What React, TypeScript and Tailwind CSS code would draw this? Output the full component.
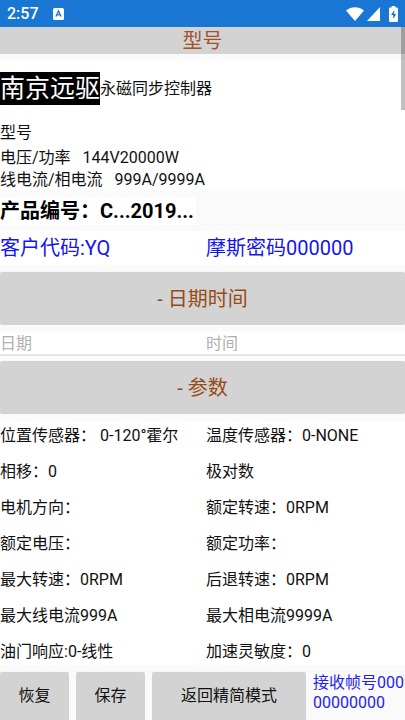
import React from "react"

interface ParamProps {
  label: string;
  value: string;
}

const params = [
  { label: "位置传感器：", value: " 0-120°霍尔" },
  { label: "温度传感器：", value: "0-NONE" },
  { label: "相移：", value: "0" },
  { label: "极对数", value: "" },
  { label: "电机方向：", value: "" },
  { label: "额定转速：", value: "0RPM" },
  { label: "额定电压：", value: "" },
  { label: "额定功率：", value: "" },
  { label: "最大转速：", value: "0RPM" },
  { label: "后退转速：", value: "0RPM" },
  { label: "最大线电流", value: "999A" },
  { label: "最大相电流", value: "9999A" },
  { label: "油门响应:", value: "0-线性" },
  { label: "加速灵敏度：", value: "0" },
]

const StatusBar = () => (
  <header className="h-[27px] shrink-0 flex items-center bg-[#1976d2] text-white pl-[7px] pr-[7px]">
    <span className="text-base leading-5 font-medium">2:57</span>
    <svg className="ml-[14px]" width="11" height="12" viewBox="0 0 11 12">
      <rect width="11" height="12" rx="1.5" fill="#fff" />
      <path d="M3 8.6 5.5 2.8 8 8.6M3.9 6.8H7.1" fill="none" stroke="#1976d2" strokeWidth="1.3" />
    </svg>
    <svg className="ml-auto" width="18" height="14" viewBox="0 0 18 14">
      <path d="M0 3.6C5-1 13-1 18 3.6L9 14Z" fill="#fff" />
    </svg>
    <svg className="ml-[3px]" width="13" height="14" viewBox="0 0 13 14">
      <path d="M13 0V14H0Z" fill="#fff" />
    </svg>
    <svg className="ml-[9px]" width="9" height="16" viewBox="0 0 9 16">
      <path d="M2.6 0H6.4V1.5H8Q9 1.5 9 2.5V15Q9 16 8 16H1Q0 16 0 15V2.5Q0 1.5 1 1.5H2.6Z" fill="#fff" />
      <path d="M5.4 4 2 9H4.1V13L7.2 8H5.1Z" fill="#1976d2" />
    </svg>
  </header>
)

const SectionButton = ({ children }: { children: React.ReactNode }) => (
  <button type="button" className="block w-full h-[53px] rounded-xs bg-[#d3d3d3] text-xl text-[#984a17]">
    {children}
  </button>
)

const Param = ({ label, value }: ParamProps) => (
  <p className="leading-6 whitespace-pre">{label}{value}</p>
)

const BottomButton = ({ className, children }: { className: string; children: React.ReactNode }) => (
  <button type="button" className={`h-12 rounded-t-xs bg-[#d3d3d3] ${className}`}>
    {children}
  </button>
)

const App = () => {
  return (
    <div className="h-screen flex flex-col bg-[#fafafa] text-base text-[#111] font-[Roboto,'Noto_Sans_CJK_SC',sans-serif]">
      <StatusBar />

      <main className="relative flex-1 min-h-0 overflow-hidden">
        {/* scroll thumb */}
        <div className="absolute right-0 top-0 w-1 h-[83px] bg-black/25" />

        <h1 className="h-[27px] bg-[#d3d3d3] text-center text-xl leading-7 text-[#a0522d]">型号</h1>

        <section className="mt-1.5 pt-3 bg-white">
          <div className="flex items-center">
            <strong className="h-[33px] bg-black text-white text-[25px] leading-[33px] font-normal">南京远驱</strong>
            <span className="leading-[22px]">永磁同步控制器</span>
          </div>
          <div className="mt-[17px] leading-[22px]">
            <p className="mb-[3px]">型号</p>
            <p className="whitespace-pre">电压/功率   144V20000W</p>
            <p className="whitespace-pre">线电流/相电流   999A/9999A</p>
          </div>
        </section>

        <div className="py-1.5">
          <p className="w-[196px] bg-white text-xl leading-7 font-bold text-black whitespace-nowrap">产品编号：C...2019...</p>
        </div>

        <div className="grid grid-cols-2 gap-[7px] bg-white text-xl leading-[34px] text-[#1414f0]">
          <p>客户代码:YQ</p>
          <p>摩斯密码000000</p>
        </div>

        <div className="py-[7px]">
          <SectionButton>- 日期时间</SectionButton>
        </div>

        <div className="grid grid-cols-2 gap-[7px] h-6 bg-white border-b-2 border-[#e6e6e6]">
          <input type="text" aria-label="日期" placeholder="日期" className="w-full min-w-0 placeholder:text-[#b0b0b0]" />
          <input type="text" aria-label="时间" placeholder="时间" className="w-full min-w-0 placeholder:text-[#b0b0b0]" />
        </div>

        <div className="pt-[5px] pb-[7px]">
          <SectionButton>- 参数</SectionButton>
        </div>

        <div className="grid grid-cols-2 gap-x-[7px] gap-y-3 bg-white pt-[3px] pb-px">
          {params.map((item, index) => (
            <Param key={index} {...item} />
          ))}
        </div>
      </main>

      <footer className="shrink-0 flex gap-[7px] pt-[7px]">
        <BottomButton className="w-[69px]">恢复</BottomButton>
        <BottomButton className="w-[69px]">保存</BottomButton>
        <BottomButton className="flex-1">返回精简模式</BottomButton>
        <p className="w-[92px] pt-px leading-5 text-[#2222f0] break-all">接收帧号00000000000</p>
      </footer>
    </div>
  )
}

export default App
